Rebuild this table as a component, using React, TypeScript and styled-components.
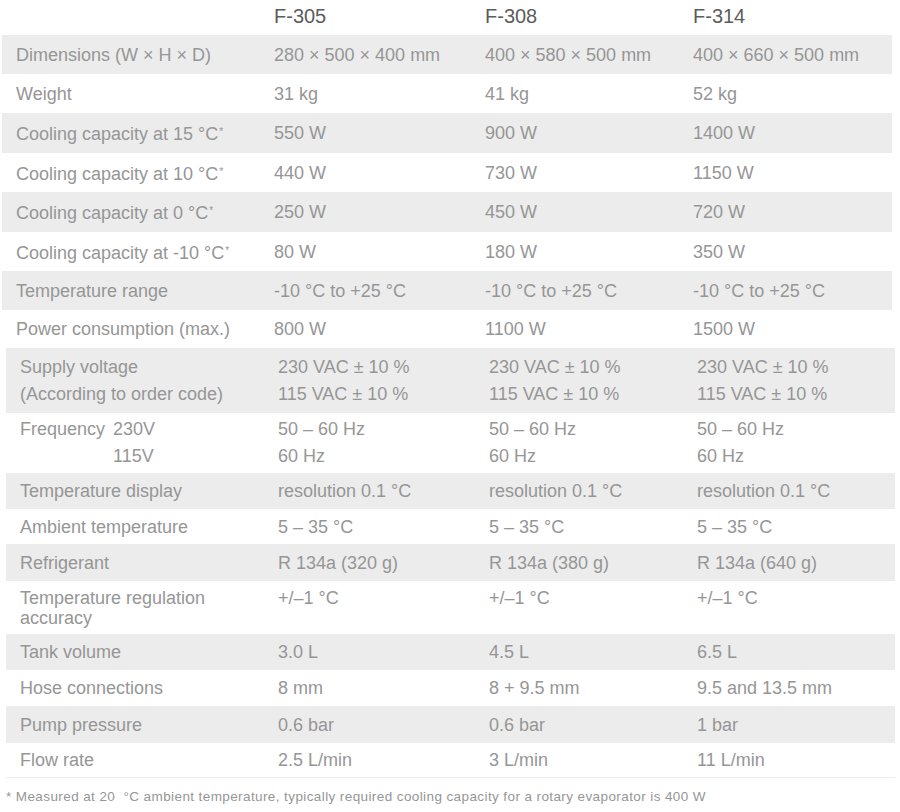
import styled, { createGlobalStyle } from "styled-components";

const Global = createGlobalStyle`
body{
  margin:0;
  background:#ffffff;
  font-family:"Liberation Sans", Arial, sans-serif;
}
`

const Page = styled.div`
width:900px;
height:812px;
background:#fff;
`
const Section = styled.div<{ $inset: number; $right: number }>`
margin-left:${p => p.$inset}px;
margin-right:${p => p.$right}px;
display:flex;
flex-direction:column;
`
const Row = styled.div<{ $h: number; $shade?: boolean; $top?: boolean }>`
display:grid;
grid-template-columns:258px 211px 208px 1fr;
height:${p => p.$h}px;
padding-left:14px;
box-sizing:border-box;
align-items:${p => (p.$top ? "start" : "center")};
padding-top:${p => (p.$top ? 7 : 0)}px;
background:${p => (p.$shade ? "#ececec" : "transparent")};
`
const HeadCell = styled.div`
font-size:20px;
color:#5c5c5c;
line-height:30px;
margin-top:-4px;
`
const Cell = styled.div<{ $lh: number }>`
font-size:18px;
color:#969696;
line-height:${p => p.$lh}px;
white-space:nowrap;
`
const Sup = styled.sup`
font-size:10px;
vertical-align:5px;
margin-left:1px;
`
const SubLabel = styled.div`
display:flex;
gap:8px;
`
const Divider = styled.div`
height:1px;
background:#ededed;
margin:0 5px 0 6px;
`
const Note = styled.p`
margin:11px 0 0 6px;
font-size:13.5px;
letter-spacing:0.4px;
color:#969696;
line-height:16px;
white-space:nowrap;
`

type Spec = {
  label: React.ReactNode;
  values: React.ReactNode[];
  h: number;
  lh?: number;
  top?: boolean;
};

const star = <Sup>*</Sup>;

const upper: Spec[] = [
  { label: "Dimensions (W × H × D)", values: ["280 × 500 × 400 mm", "400 × 580 × 500 mm", "400 × 660 × 500 mm"], h: 39 },
  { label: "Weight", values: ["31 kg", "41 kg", "52 kg"], h: 39 },
  { label: <>Cooling capacity at 15 °C{star}</>, values: ["550 W", "900 W", "1400 W"], h: 40 },
  { label: <>Cooling capacity at 10 °C{star}</>, values: ["440 W", "730 W", "1150 W"], h: 39 },
  { label: <>Cooling capacity at 0 °C{star}</>, values: ["250 W", "450 W", "720 W"], h: 40 },
  { label: <>Cooling capacity at -10 °C{star}</>, values: ["80 W", "180 W", "350 W"], h: 39 },
  { label: "Temperature range", values: ["-10 °C to +25 °C", "-10 °C to +25 °C", "-10 °C to +25 °C"], h: 39 },
  { label: "Power consumption (max.)", values: ["800 W", "1100 W", "1500 W"], h: 38 },
];

const two = (a: string, b: string) => (
  <>
    {a}
    <br />
    {b}
  </>
);

const lower: Spec[] = [
  {
    label: two("Supply voltage", "(According to order code)"),
    values: [two("230 VAC ± 10 %", "115 VAC ± 10 %"), two("230 VAC ± 10 %", "115 VAC ± 10 %"), two("230 VAC ± 10 %", "115 VAC ± 10 %")],
    h: 65,
    lh: 27,
  },
  {
    label: (
      <SubLabel>
        <span>Frequency</span>
        <span>{two("230V", "115V")}</span>
      </SubLabel>
    ),
    values: [two("50 – 60 Hz", "60 Hz"), two("50 – 60 Hz", "60 Hz"), two("50 – 60 Hz", "60 Hz")],
    h: 60,
    lh: 27,
  },
  { label: "Temperature display", values: ["resolution 0.1 °C", "resolution 0.1 °C", "resolution 0.1 °C"], h: 36 },
  { label: "Ambient temperature", values: ["5 – 35 °C", "5 – 35 °C", "5 – 35 °C"], h: 35 },
  { label: "Refrigerant", values: ["R 134a (320 g)", "R 134a (380 g)", "R 134a (640 g)"], h: 37 },
  {
    label: two("Temperature regulation", "accuracy"),
    values: ["+/–1 °C", "+/–1 °C", "+/–1 °C"],
    h: 53,
    lh: 20,
    top: true,
  },
  { label: "Tank volume", values: ["3.0 L", "4.5 L", "6.5 L"], h: 36 },
  { label: "Hose connections", values: ["8 mm", "8 + 9.5 mm", "9.5 and 13.5 mm"], h: 36 },
  { label: "Pump pressure", values: ["0.6 bar", "0.6 bar", "1 bar"], h: 37 },
  { label: "Flow rate", values: ["2.5 L/min", "3 L/min", "11 L/min"], h: 34 },
];

const SpecRows = ({ rows, startShaded }: { rows: Spec[]; startShaded: boolean }) => (
  <>
    {rows.map((r, i) => (
      <Row key={i} $h={r.h} $shade={(i % 2 === 0) === startShaded} $top={r.top}>
        <Cell $lh={r.lh ?? 24}>{r.label}</Cell>
        {r.values.map((v, j) => (
          <Cell key={j} $lh={r.lh ?? 24}>
            {v}
          </Cell>
        ))}
      </Row>
    ))}
  </>
);

export default function App() {
  return (
    <Page>
      <Global />
      <Section $inset={2} $right={8}>
        <Row $h={35}>
          <span />
          <HeadCell>F-305</HeadCell>
          <HeadCell>F-308</HeadCell>
          <HeadCell>F-314</HeadCell>
        </Row>
        <SpecRows rows={upper} startShaded={true} />
      </Section>
      <Section $inset={6} $right={5}>
        <SpecRows rows={lower} startShaded={true} />
      </Section>
      <Divider />
      <Note>
        * Measured at 20 &nbsp;°C ambient temperature, typically required cooling capacity for a rotary evaporator is 400 W
      </Note>
    </Page>
  );
}
